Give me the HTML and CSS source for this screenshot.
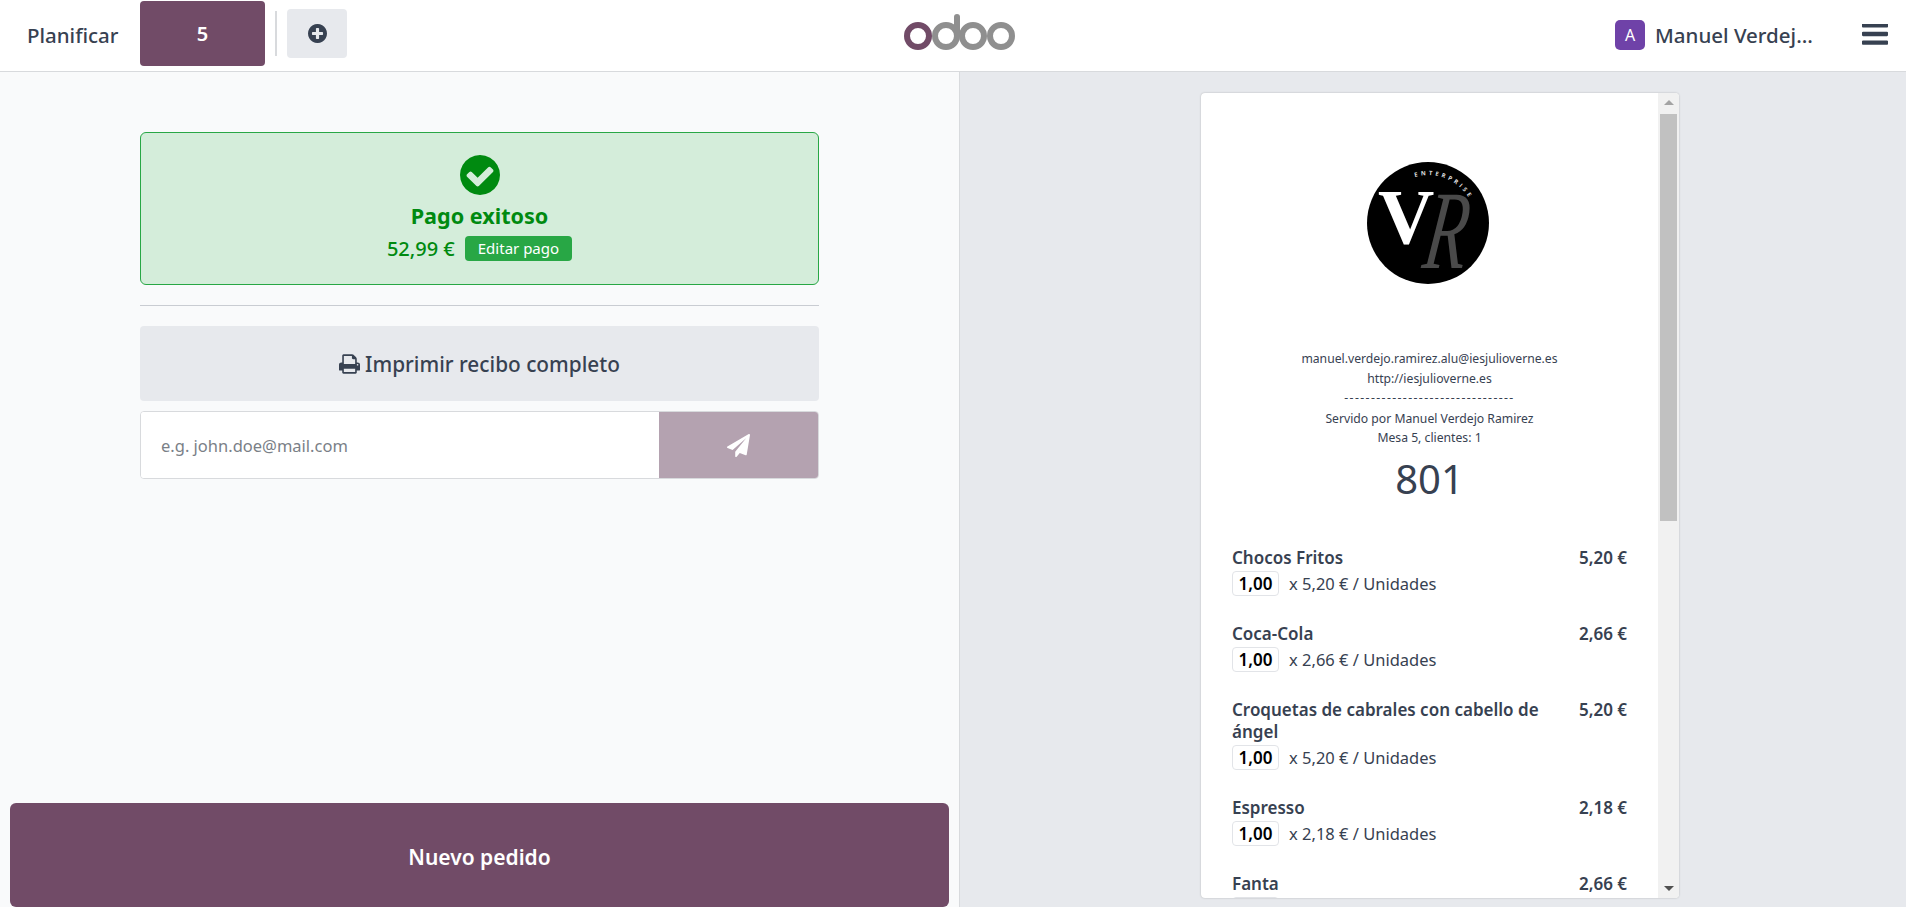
FILE: index.html
```html
<!DOCTYPE html>
<html lang="es">
<head>
	<meta charset="UTF-8">
	<title>Punto de venta</title>
	<link rel="stylesheet" href="styles.css">
</head>
<body>
	<div class="header">
		<div class="header-left">
			<span class="plan">Planificar</span>
			<div class="table-btn">5</div>
			<span class="sep"></span>
			<div class="add-btn">
				<svg class="icon-add" viewBox="128 128 1536 1536"><path d="M1344 960v-128q0-26-19-45t-45-19h-256v-256q0-26-19-45t-45-19h-128q-26 0-45 19t-19 45v256h-256q-26 0-45 19t-19 45v128q0 26 19 45t45 19h256v256q0 26 19 45t45 19h128q26 0 45-19t19-45v-256h256q26 0 45-19t19-45zm320-64q0 209-103 385.5t-279.5 279.5-385.5 103-385.5-103-279.5-279.5-103-385.5 103-385.5 279.5-279.5 385.5-103 385.5 103 279.5 279.5 103 385.5z"/></svg>
			</div>
		</div>
		<svg class="logo" viewBox="0 0 111 36">
			<circle cx="14" cy="22" r="11" fill="none" stroke="#714b67" stroke-width="6"/>
			<circle cx="42" cy="22" r="11" fill="none" stroke="#8f8f8f" stroke-width="6"/>
			<rect x="50" y="0" width="6" height="22" rx="3" fill="#8f8f8f"/>
			<circle cx="69" cy="22" r="11" fill="none" stroke="#8f8f8f" stroke-width="6"/>
			<circle cx="97" cy="22" r="11" fill="none" stroke="#8f8f8f" stroke-width="6"/>
		</svg>
		<div class="header-right">
			<span class="avatar">A</span>
			<span class="user">Manuel Verdejo Ramirez</span>
			<svg class="icon-bars" viewBox="128 320 1536 1216"><path d="M1664 1344v128q0 26-19 45t-45 19h-1408q-26 0-45-19t-19-45v-128q0-26 19-45t45-19h1408q26 0 45 19t19 45zm0-512v128q0 26-19 45t-45 19h-1408q-26 0-45-19t-19-45v-128q0-26 19-45t45-19h1408q26 0 45 19t19 45zm0-512v128q0 26-19 45t-45 19h-1408q-26 0-45-19t-19-45v-128q0-26 19-45t45-19h1408q26 0 45 19t19 45z"/></svg>
		</div>
	</div>

	<div class="main">
		<div class="left">
			<div class="left-inner">
				<div class="success">
					<svg class="icon-check" viewBox="128 128 1536 1536"><path d="M1412 734q0-28-18-46l-91-90q-19-19-45-19t-45 19l-408 407-226-226q-19-19-45-19t-45 19l-91 90q-18 18-18 46 0 27 18 45l362 362q19 19 45 19 27 0 46-19l543-543q18-18 18-45zm252 162q0 209-103 385.5t-279.5 279.5-385.5 103-385.5-103-279.5-279.5-103-385.5 103-385.5 279.5-279.5 385.5-103 385.5 103 279.5 279.5 103 385.5z"/></svg>
					<div class="success-title">Pago exitoso</div>
					<div class="success-line">
						<span>52,99 €</span>
						<span class="edit-btn">Editar pago</span>
					</div>
				</div>
				<hr class="rule">
				<div class="print-btn">
					<svg class="icon-print" viewBox="64 128 1664 1536"><path d="M448 1536h896v-256h-896v256zm0-640h896v-384h-160q-40 0-68-28t-28-68v-160h-640v640zm1152 64q0-26-19-45t-45-19-45 19-19 45 19 45 45 19 45-19 19-45zm128 0v416q0 13-9.5 22.5t-22.5 9.5h-224v160q0 40-28 68t-68 28h-960q-40 0-68-28t-28-68v-160h-224q-13 0-22.5-9.5t-9.5-22.5v-416q0-79 56.5-135.5t135.5-56.5h64v-544q0-40 28-68t68-28h672q40 0 88 20t76 48l152 152q28 28 48 76t20 88v256h64q79 0 135.5 56.5t56.5 135.5z"/></svg>
					<span>Imprimir recibo completo</span>
				</div>
				<div class="mail">
					<input class="mail-input" type="text" placeholder="e.g. john.doe@mail.com">
					<div class="mail-send">
						<svg class="icon-send" viewBox="0 0 1792 1792"><path d="M1764 11q33 24 27 64l-256 1536q-5 29-32 45-14 8-31 8-11 0-24-5l-453-185-242 295q-18 23-49 23-13 0-22-4-19-7-30.5-23.5t-11.5-36.5v-349l864-1059-1069 925-395-162q-37-14-40-55-2-40 32-59l1664-960q15-9 32-9 20 0 36 11z"/></svg>
					</div>
				</div>
			</div>
			<div class="new-order">Nuevo pedido</div>
		</div>

		<div class="right">
			<div class="receipt">
				<div class="ticket">
					<svg class="brand" viewBox="0 0 122 122">
						<defs><path id="arc" d="M48 15 A48 48 0 0 1 109 61"/></defs>
						<circle cx="61" cy="61" r="61" fill="#000"/>
						<text class="brand-small" fill="#ddd"><textPath href="#arc">ENTERPRISE</textPath></text>
						<text class="brand-v" x="11" y="81" fill="#fff">V</text>
						<text class="brand-r" transform="translate(54 106) skewX(-8) scale(.62 1)" fill="#4a4a4a">R</text>
					</svg>
					<div class="contact">
						<div>manuel.verdejo.ramirez.alu@iesjulioverne.es</div>
						<div>http://iesjulioverne.es</div>
						<div class="dashes">--------------------------------</div>
						<div class="served">Servido por Manuel Verdejo Ramirez</div>
						<div>Mesa 5, clientes: 1</div>
					</div>
					<div class="number">801</div>

					<div class="item">
						<div class="item-top"><span class="item-name">Chocos Fritos</span><span class="item-price">5,20 €</span></div>
						<div class="item-sub"><span class="qty">1,00</span><span>x 5,20 € / Unidades</span></div>
					</div>
					<div class="item">
						<div class="item-top"><span class="item-name">Coca-Cola</span><span class="item-price">2,66 €</span></div>
						<div class="item-sub"><span class="qty">1,00</span><span>x 2,66 € / Unidades</span></div>
					</div>
					<div class="item">
						<div class="item-top"><span class="item-name">Croquetas de cabrales con cabello de ángel</span><span class="item-price">5,20 €</span></div>
						<div class="item-sub"><span class="qty">1,00</span><span>x 5,20 € / Unidades</span></div>
					</div>
					<div class="item">
						<div class="item-top"><span class="item-name">Espresso</span><span class="item-price">2,18 €</span></div>
						<div class="item-sub"><span class="qty">1,00</span><span>x 2,18 € / Unidades</span></div>
					</div>
					<div class="item">
						<div class="item-top"><span class="item-name">Fanta</span><span class="item-price">2,66 €</span></div>
						<div class="item-sub"><span class="qty">1,00</span><span>x 2,66 € / Unidades</span></div>
					</div>
				</div>
				<div class="scrollbar">
					<span class="arrow-up"></span>
					<span class="thumb"></span>
					<span class="arrow-down"></span>
				</div>
			</div>
		</div>
	</div>
</body>
</html>
```

FILE: styles.css
```css
*{
	box-sizing: border-box;
}
html,body{
	height: 100%;
}
body{
	margin: 0;
	display: flex;
	flex-direction: column;
	overflow: hidden;
	font-family: "Noto Sans", "Liberation Sans", sans-serif;
	color: #374151;
	background: #fff;
}

/* header */
.header{
	display: flex;
	align-items: center;
	height: 72px;
	flex: none;
	background: #fff;
	border-bottom: 1px solid #d8dadd;
}
.header-left{
	display: flex;
	align-items: center;
	width: 904px;
	height: 100%;
	padding-bottom: 5px;
}
.plan{
	width: 140px;
	margin-top: 3px;
	padding-left: 27px;
	font-size: 20.5px;
	font-weight: 500;
}
.table-btn{
	display: flex;
	align-items: center;
	justify-content: center;
	width: 125px;
	height: 65px;
	margin-top: 1px;
	border-radius: 4px;
	background: #714b67;
	color: #fff;
	font-size: 20px;
	font-weight: 600;
}
.sep{
	width: 2px;
	height: 45px;
	margin: 0 10px;
	background: #d8dadd;
}
.add-btn{
	display: flex;
	align-items: center;
	justify-content: center;
	width: 60px;
	height: 49px;
	border-radius: 4px;
	background: #e7e9ed;
}
.icon-add{
	width: 19px;
	height: 19px;
	fill: #374151;
}
.logo{
	flex: none;
	width: 111px;
	height: 36px;
	margin-top: -8px;
}
.header-right{
	flex: 1;
	display: flex;
	align-items: center;
	justify-content: flex-end;
	padding-right: 18px;
	padding-bottom: 2px;
}
.avatar{
	display: flex;
	align-items: center;
	justify-content: center;
	width: 30px;
	height: 30px;
	border-radius: 5px;
	background: #6f42a8;
	color: #fff;
	font-size: 16px;
}
.user{
	width: 162px;
	margin-left: 10px;
	overflow: hidden;
	white-space: nowrap;
	text-overflow: ellipsis;
	font-size: 20.5px;
	font-weight: 500;
}
.icon-bars{
	width: 26px;
	height: 21px;
	margin-left: 45px;
	fill: #374151;
}

/* main */
.main{
	flex: 1;
	display: flex;
	min-height: 0;
}
.left{
	display: flex;
	flex-direction: column;
	width: 960px;
	flex: none;
	background: #f9fafb;
	border-right: 1px solid #d8dadd;
}
.left-inner{
	flex: 1;
	padding: 60px 140px 0 140px;
}
.success{
	display: flex;
	flex-direction: column;
	align-items: center;
	height: 153px;
	padding-top: 22px;
	border: 1px solid #28a745;
	border-radius: 6px;
	background: #d4edda;
	color: #008a10;
}
.icon-check{
	width: 40px;
	height: 40px;
	fill: #008a10;
}
.success-title{
	margin-top: 6px;
	font-size: 21.6px;
	line-height: 30px;
	font-weight: 700;
}
.success-line{
	display: flex;
	align-items: center;
	gap: 10px;
	margin-top: 5px;
	font-size: 20px;
	line-height: 25px;
	font-weight: 500;
}
.edit-btn{
	display: block;
	height: 25px;
	padding: 0 13px;
	border-radius: 4px;
	background: #28a745;
	color: #fff;
	font-size: 15px;
	line-height: 25px;
	font-weight: 400;
}
.rule{
	height: 1px;
	margin: 20px 0;
	border: 0;
	background: #c9ccd2;
}
.print-btn{
	display: flex;
	align-items: center;
	justify-content: center;
	gap: 5px;
	height: 75px;
	border-radius: 4px;
	background: #e7e9ed;
	font-size: 20.8px;
	font-weight: 500;
}
.icon-print{
	width: 21px;
	height: 20px;
	fill: #374151;
}
.mail{
	display: flex;
	height: 68px;
	margin-top: 10px;
	border: 1px solid #d8dadd;
	border-radius: 4px;
	overflow: hidden;
	background: #fff;
}
.mail-input{
	flex: 1;
	min-width: 0;
	padding: 0 20px;
	border: 0;
	outline: 0;
	font-family: inherit;
	font-size: 16.5px;
	color: #374151;
}
.mail-input::placeholder{
	color: #7a7f87;
	opacity: 1;
}
.mail-send{
	display: flex;
	align-items: center;
	justify-content: center;
	width: 159px;
	background: #b4a2b0;
}
.icon-send{
	width: 23px;
	height: 23px;
	fill: #fff;
}
.new-order{
	display: flex;
	align-items: center;
	justify-content: center;
	height: 104px;
	margin: 0 10px;
	padding-top: 3px;
	border-radius: 6px;
	background: #714b67;
	color: #fff;
	font-size: 21px;
	font-weight: 600;
}

/* receipt */
.right{
	flex: 1;
	padding-top: 21px;
	padding-left: 241px;
	background: #e7e9ed;
}
.receipt{
	display: flex;
	width: 478px;
	height: 805px;
	border-radius: 4px;
	overflow: hidden;
	background: #fff;
	box-shadow: 0 0 2px rgba(0,0,0,0.25);
}
.ticket{
	flex: 1;
	min-width: 0;
	padding: 69px 31px 0 31px;
	overflow: hidden;
}
.brand{
	display: block;
	width: 122px;
	height: 122px;
	margin: 0 auto;
	transform: translateX(-2px);
}
.brand-small{
	font-family: "Open Sans", sans-serif;
	font-size: 6px;
	font-weight: 700;
	letter-spacing: 2.8px;
}
.brand-v{
	font-family: "Liberation Serif", serif;
	font-size: 78px;
	font-weight: 700;
}
.brand-r{
	font-family: "Liberation Serif", serif;
	font-style: italic;
	font-size: 112px;
}
.contact{
	margin-top: 65px;
	text-align: center;
	font-size: 12.2px;
	line-height: 19.5px;
}
.dashes{
	letter-spacing: 1.4px;
}
.served{
	margin-top: 1px;
}
.number{
	margin-top: 4px;
	text-align: center;
	font-size: 40px;
	line-height: 54px;
}
.item{
	margin-bottom: 27px;
}
.number + .item{
	margin-top: 41px;
}
.item-top{
	display: flex;
	justify-content: space-between;
	font-size: 17px;
	line-height: 22px;
	font-weight: 600;
}
.item-name{
	width: 310px;
}
.item-sub{
	display: flex;
	align-items: center;
	margin-top: 2px;
	font-size: 16.5px;
}
.qty{
	display: block;
	width: 47px;
	height: 25px;
	margin-right: 10px;
	border: 1px solid #e2e4e8;
	border-radius: 4px;
	text-align: center;
	color: #000;
	font-size: 17px;
	font-weight: 600;
	line-height: 23px;
}

/* scrollbar */
.scrollbar{
	position: relative;
	flex: none;
	width: 21px;
	background: #f1f1f1;
}
.thumb{
	position: absolute;
	top: 21px;
	left: 2px;
	width: 17px;
	height: 407px;
	background: #c1c1c1;
}
.arrow-up{
	position: absolute;
	top: 7px;
	left: 6px;
	border-left: 5px solid transparent;
	border-right: 5px solid transparent;
	border-bottom: 5px solid #a3a3a3;
}
.arrow-down{
	position: absolute;
	bottom: 7px;
	left: 6px;
	border-left: 5px solid transparent;
	border-right: 5px solid transparent;
	border-top: 5px solid #505050;
}
```
